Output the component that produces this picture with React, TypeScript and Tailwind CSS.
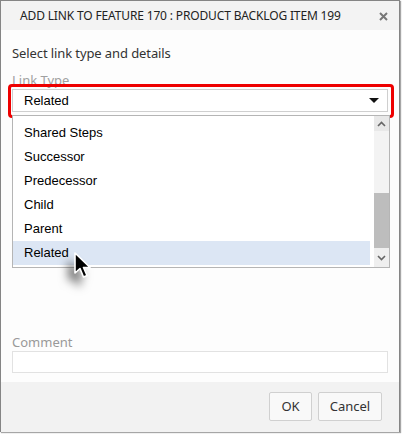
import React from "react";

const items = ["Shared Steps", "Successor", "Predecessor", "Child", "Parent", "Related"];

export default function App() {
  return (
    <div className="h-[434px] w-[402px] bg-white font-['Noto_Sans',sans-serif] text-[#333]">
      <div className="relative flex h-[432px] w-[400px] flex-col border border-[#858585] bg-[#fdfdfd] shadow-[1px_1px_1px_rgba(0,0,0,0.35)]">
        {/* header */}
        <div className="flex h-[29px] shrink-0 items-center justify-between bg-[#f3f3f3] pl-[19px] pr-[11px]">
          <span className="text-[12px] tracking-[-0.15px] text-[#222]">
            ADD LINK TO FEATURE 170 : PRODUCT BACKLOG ITEM 199
          </span>
          <svg width="9" height="9" viewBox="0 0 9 9" className="mt-[1px]">
            <path d="M1 1 L8 8 M8 1 L1 8" stroke="#777" strokeWidth="2" />
          </svg>
        </div>

        {/* body */}
        <div className="flex flex-1 flex-col px-[11px] pt-[14px]">
          <p className="text-[13px] leading-[18px] tracking-[-0.1px] text-[#333]">Select link type and details</p>
          <p className="mt-[9px] text-[13px] leading-[18px] text-[#a0a0a0]">Link Type</p>
          <div className="flex h-[23px] items-center justify-between border border-[#cfcfcf] bg-white pl-[11px] pr-[8px] font-['Liberation_Sans',sans-serif] text-[13px] text-black">
            <span>Related</span>
            <svg width="10" height="6" viewBox="0 0 10 6">
              <path d="M0 0 H10 L5 5 Z" fill="#111" />
            </svg>
          </div>

          {/* content hidden behind the open list */}
          <div className="mt-[125px] flex h-[30px] justify-between px-[6px]">
            <div className="w-[167px] border-b-[3px] border-[#b8c98f] bg-white" />
            <div className="w-[168px] border-b-[3px] border-[#9db6d8] bg-white" />
          </div>

          <p className="mt-[66px] text-[13px] leading-[18px] text-[#999]">Comment</p>
          <div className="h-[22px] border border-[#e2e2e2] bg-white" />
        </div>

        {/* footer */}
        <div className="mt-[9px] flex h-[50px] shrink-0 items-start justify-end gap-[6px] bg-[#f2f2f2] pr-[17px] pt-[10px]">
          <button className="h-[29px] w-[43px] rounded-[2px] border border-[#d0d0d0] bg-[#f9f9f9] text-[13px] text-[#333]">
            OK
          </button>
          <button className="h-[29px] w-[64px] rounded-[2px] border border-[#d0d0d0] bg-[#f9f9f9] text-[13px] text-[#333]">
            Cancel
          </button>
        </div>

        {/* red highlight annotation */}
        <div className="absolute left-[7px] top-[83px] h-[34px] w-[386px] rounded-[4px] border-[3px] border-[#ee0000]" />

        {/* open dropdown list */}
        <div className="absolute left-[11px] top-[114px] flex h-[153px] w-[378px] border border-[#b5b5b5] bg-white font-['Liberation_Sans',sans-serif] text-[13px] text-black">
          <div className="flex flex-1 flex-col pt-[5px]">
            {items.map((it) => (
              <div
                key={it}
                className={
                  it === "Related"
                    ? "mr-[4px] flex h-[24px] items-center bg-[#dce6f4] pl-[11px]"
                    : "flex h-[24px] items-center pl-[11px]"
                }
              >
                {it}
              </div>
            ))}
          </div>
          <div className="flex w-[15px] flex-col bg-[#f3f3f3]">
            <div className="flex h-[15px] items-center justify-center bg-[#e8e8e8]">
              <svg width="9" height="6" viewBox="0 0 9 6">
                <path d="M1 5 L4.5 1.5 L8 5" stroke="#666" strokeWidth="1.6" fill="none" />
              </svg>
            </div>
            <div className="h-[62px]" />
            <div className="h-[55px] bg-[#bdbdbd]" />
            <div className="flex h-[19px] items-center justify-center bg-[#efefef]">
              <svg width="9" height="6" viewBox="0 0 9 6">
                <path d="M1 1 L4.5 4.5 L8 1" stroke="#666" strokeWidth="1.6" fill="none" />
              </svg>
            </div>
          </div>
        </div>

        {/* mouse cursor */}
        <svg
          width="24"
          height="32"
          viewBox="0 0 24 32"
          className="absolute left-[71px] top-[250px] drop-shadow-[-6px_8px_5px_rgba(0,0,0,0.55)]"
        >
          <path
            d="M3 2 L3 22 L8 17.5 L11.5 26 L15 24.5 L11.5 16.5 L18 16.5 Z"
            fill="#000"
            stroke="#fff"
            strokeWidth="1.6"
            strokeLinejoin="round"
          />
        </svg>
      </div>
    </div>
  );
}
